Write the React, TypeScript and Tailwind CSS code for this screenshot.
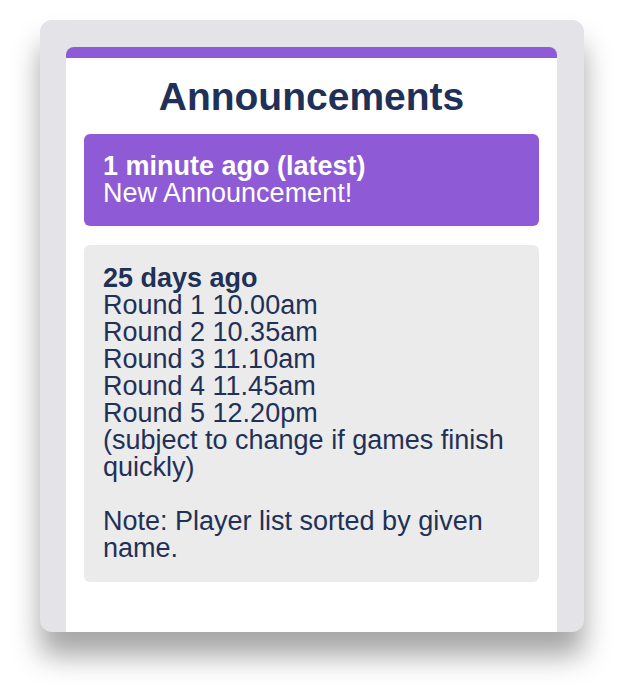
import React from "react";

export default function App() {
  const font = { fontFamily: '"Liberation Sans", Arial, sans-serif' };
  return (
    <div className="w-[624px] h-[692px] bg-white pt-[20px] pl-[40px]" style={font}>
      <div className="w-[544px] h-[612px] bg-[#e3e3e8] rounded-[12px] pt-[27px] pl-[26px] overflow-hidden shadow-[0_24px_28px_rgba(0,0,0,0.35)]">
        <div className="w-[491px] h-[600px] bg-white rounded-t-[8px] border-t-[11px] border-[#8e5ad6] px-[18px]">
          <h1 className="text-center text-[39px] font-bold text-[#1f3157] leading-[46px] pt-[16px] pb-[14px]">
            Announcements
          </h1>
          <div className="bg-[#8e5ad6] rounded-[6px] px-[19px] py-[19px] text-white text-[27px] leading-[27px]">
            <div className="font-bold">1 minute ago (latest)</div>
            <div>New Announcement!</div>
          </div>
          <div className="mt-[19px] bg-[#ebebeb] rounded-[6px] px-[19px] py-[20px] text-[#1f3157] text-[27px] leading-[27px]">
            <div className="font-bold">25 days ago</div>
            <div>Round 1 10.00am</div>
            <div>Round 2 10.35am</div>
            <div>Round 3 11.10am</div>
            <div>Round 4 11.45am</div>
            <div>Round 5 12.20pm</div>
            <div>(subject to change if games finish quickly)</div>
            <div className="h-[27px]"></div>
            <div>Note: Player list sorted by given name.</div>
          </div>
        </div>
      </div>
    </div>
  );
}
